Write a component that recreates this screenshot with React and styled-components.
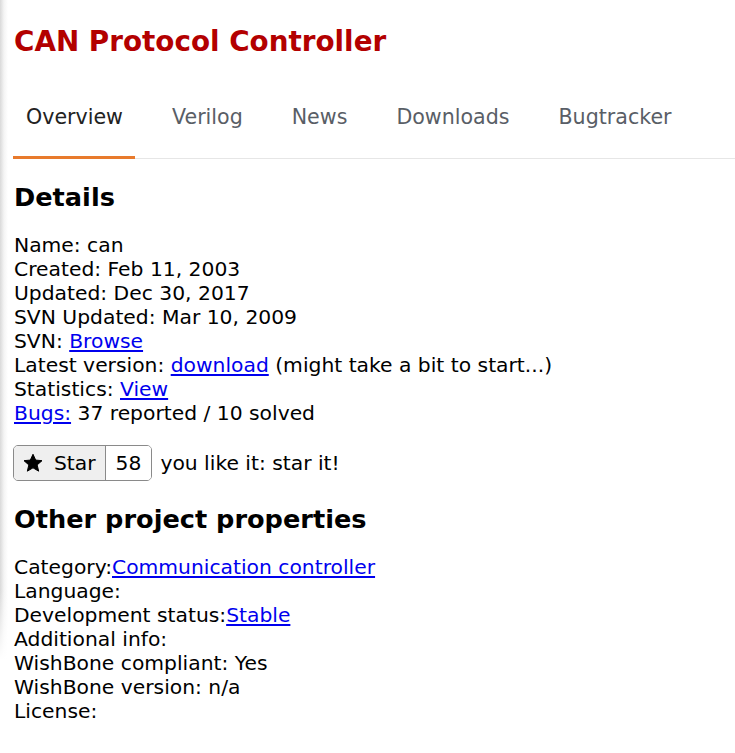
import React from "react";
import styled, { createGlobalStyle } from "styled-components";

const Global = createGlobalStyle`
  html, body { margin: 0; padding: 0; }
  body {
    min-height: 753px;
    font-family: "DejaVu Sans", Verdana, sans-serif;
    color: #000;
    background:
      linear-gradient(to bottom, rgba(255,255,255,0) 590px, #fff 660px),
      linear-gradient(to right, #d9d9d9 0px, #f4f4f4 4px, #fff 8px);
    background-repeat: no-repeat;
  }
`;

const Page = styled.main`
  padding: 25px 0 0 14px;
`;

const Title = styled.h1`
  margin: 0;
  font-size: 27.8px;
  font-weight: bold;
  line-height: 33px;
  color: #b30000;
`;

const TabList = styled.nav`
  display: flex;
  gap: 24px;
  margin: 20px 0 0 -1px;
  border-bottom: 1px solid #e6e6e6;
`;

const Tab = styled.a`
  display: block;
  padding: 27px 12px 27px 13px;
  font-size: 20.6px;
  line-height: 24px;
  color: ${(p) => (p.$active ? "#222" : "#595e66")};
  text-decoration: none;
  border-bottom: 3px solid ${(p) => (p.$active ? "#e87a2c" : "transparent")};
  margin-bottom: -1px;
`;

const Heading = styled.h2`
  margin: ${(p) => (p.$first ? "23px" : "0")} 0 21px;
  font-size: 25.6px;
  line-height: 30px;
  font-weight: bold;
`;

const Lines = styled.div`
  font-size: 20.3px;
  line-height: 24px;
`;

const Line = styled.div``;

const Link = styled.a`
  color: #0000ee;
  text-decoration: underline;
`;

const StarRow = styled.div`
  display: flex;
  align-items: center;
  gap: 8px;
  margin: 20px 0 23px -1px;
  font-size: 20.3px;
`;

const StarButton = styled.div`
  display: flex;
  height: 36px;
  box-sizing: border-box;
  border: 1px solid #8a8a8a;
  border-radius: 5px;
  overflow: hidden;
`;

const StarLabel = styled.span`
  display: flex;
  align-items: center;
  gap: 11px;
  padding: 0 9px 0 9px;
  background: #efefef;
  border-right: 1px solid #8a8a8a;
`;

const StarCount = styled.span`
  display: flex;
  align-items: center;
  padding: 0 10px 0 10px;
  background: #fff;
`;

const StarIcon = () => (
  <svg width="20" height="20" viewBox="0 0 24 24" aria-hidden="true">
    <path
      d="M12 1.5l3.2 7 7.6.7-5.8 5.1 1.8 7.5L12 17.8l-6.8 4 1.8-7.5-5.8-5.1 7.6-.7z"
      fill="#000"
      stroke="#000"
      strokeWidth="1.2"
      strokeLinejoin="round"
    />
  </svg>
);

export default function App() {
  return (
    <>
      <Global />
      <Page>
        <Title>CAN Protocol Controller</Title>
        <TabList>
          <Tab $active href="#">Overview</Tab>
          <Tab href="#">Verilog</Tab>
          <Tab href="#">News</Tab>
          <Tab href="#">Downloads</Tab>
          <Tab href="#">Bugtracker</Tab>
        </TabList>

        <Heading $first>Details</Heading>
        <Lines>
          <Line>Name: can</Line>
          <Line>Created: Feb 11, 2003</Line>
          <Line>Updated: Dec 30, 2017</Line>
          <Line>SVN Updated: Mar 10, 2009</Line>
          <Line>SVN: <Link href="#">Browse</Link></Line>
          <Line>
            Latest version: <Link href="#">download</Link> (might take a bit to start...)
          </Line>
          <Line>Statistics: <Link href="#">View</Link></Line>
          <Line><Link href="#">Bugs:</Link> 37 reported / 10 solved</Line>
        </Lines>

        <StarRow>
          <StarButton>
            <StarLabel><StarIcon />Star</StarLabel>
            <StarCount>58</StarCount>
          </StarButton>
          <span>you like it: star it!</span>
        </StarRow>

        <Heading>Other project properties</Heading>
        <Lines>
          <Line>Category:<Link href="#">Communication controller</Link></Line>
          <Line>Language:</Line>
          <Line>Development status:<Link href="#">Stable</Link></Line>
          <Line>Additional info:</Line>
          <Line>WishBone compliant: Yes</Line>
          <Line>WishBone version: n/a</Line>
          <Line>License:</Line>
        </Lines>
      </Page>
    </>
  );
}
